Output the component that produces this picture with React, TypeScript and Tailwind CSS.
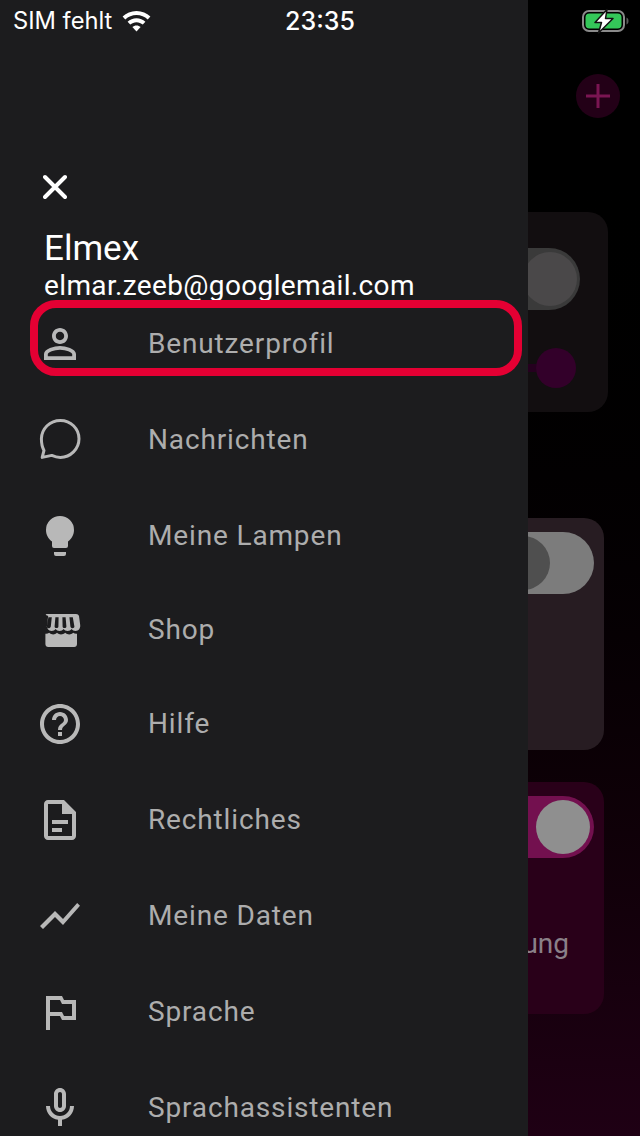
import React from 'react';

const menuItems: { label: string; rowClass: string; icon: React.ReactNode }[] = [
  {
    label: 'Benutzerprofil',
    rowClass: 'h-[96px]',
    icon: (
      <path d="M12 5.9c1.16 0 2.1.94 2.1 2.1s-.94 2.1-2.1 2.1S9.9 9.16 9.9 8s.94-2.1 2.1-2.1m0 9c2.97 0 6.1 1.46 6.1 2.1v1.1H5.9V17c0-.64 3.13-2.1 6.1-2.1M12 4C9.79 4 8 5.79 8 8s1.79 4 4 4 4-1.79 4-4-1.79-4-4-4zm0 9c-2.67 0-8 1.34-8 4v3h16v-3c0-2.66-5.33-4-8-4z" />
    ),
  },
  {
    label: 'Nachrichten',
    rowClass: 'h-[96px]',
    icon: (
      <path
        fill="none"
        stroke="currentColor"
        strokeWidth="1.5"
        strokeLinejoin="round"
        d="M12.200 2.200c5.100 0 9.300 4.100 9.300 9.200s-4.200 9.300-9.300 9.300c-1.500 0-3-.4-4.300-1l-4.800 1 .9-3.500C2.900 15.300 2.700 13.400 2.700 11.400c.1-5.100 4.300-9.200 9.500-9.200z"
      />
    ),
  },
  {
    label: 'Meine Lampen',
    rowClass: 'h-[96px]',
    icon: (
      <path d="M12,2A7,7 0 0,0 5,9C5,11.38 6.19,13.47 8,14.74V17A1,1 0 0,0 9,18H15A1,1 0 0,0 16,17V14.74C17.81,13.47 19,11.38 19,9A7,7 0 0,0 12,2M9,21A1,1 0 0,0 10,22H14A1,1 0 0,0 15,21V20H9V21Z" />
    ),
  },
  {
    label: 'Shop',
    rowClass: 'h-[92px]',
    icon: (
      <>
        <path
          fillRule="evenodd"
          d="M6 4h14c.8 0 1.300.4 1.500 1l.6 4.500c.2 1.600-.8 3-2.300 3-.9 0-1.600-.4-2-1-.4.6-1.200 1-2 1s-1.600-.4-2-1c-.4.6-1.200 1-2 1s-1.600-.4-2-1c-.4.6-1.100 1-2 1-1.500 0-2.500-1.400-2.300-3l.6-4.500C4.300 4.400 4.800 4 5.600 4zM6.200 5.600l-.8 4.700c0 1 1.800 1.100 2-.1l.5-4.600zm3.500 0l-.4 4.700c0 1 1.900 1 1.900 0l.1-4.700zm3.500 0l.1 4.700c0 1 1.900 1 1.900 0l-.4-4.700zm3.500 0l.5 4.600c.2 1.200 2 1.100 2 .1l-.8-4.700z"
        />
        <path d="M4.700 13.900c.7.100 1.400-.1 1.900-.5.6.6 1.300.8 2 .8s1.300-.3 1.900-.8c.6.500 1.300.8 2 .8s1.500-.3 2.100-.8c.6.500 1.300.8 2 .8s1.400-.2 2-.8c.5.400 1.200.6 1.900.5v5.100c0 .9-.6 1.500-1.400 1.500H6.100c-.8 0-1.400-.6-1.400-1.500z" />
      </>
    ),
  },
  {
    label: 'Hilfe',
    rowClass: 'h-[96px]',
    icon: (
      <path d="M11 18h2v-2h-2v2zm1-16C6.480 2 2 6.480 2 12s4.480 10 10 10 10-4.480 10-10S17.520 2 12 2zm0 18c-4.410 0-8-3.590-8-8s3.590-8 8-8 8 3.590 8 8-3.590 8-8 8zm0-14c-2.210 0-4 1.790-4 4h2c0-1.100.9-2 2-2s2 .9 2 2c0 2-3 1.750-3 5h2c0-2.250 3-2.500 3-5 0-2.210-1.790-4-4-4z" />
    ),
  },
  {
    label: 'Rechtliches',
    rowClass: 'h-[96px]',
    icon: (
      <path d="M8 12h8v2H8zm0 4h5v2H8zm6-14H6c-1.100 0-2 .9-2 2v16c0 1.100.89 2 1.990 2H18c1.100 0 2-.9 2-2V8l-6-6zm4 18H6V4h7v5h5v11z" />
    ),
  },
  {
    label: 'Meine Daten',
    rowClass: 'h-[96px]',
    icon: <path d="M3.500 18.490l6-6.010 4 4L22 6.920l-1.410-1.410-7.090 7.970-4-4L2 16.990z" />,
  },
  {
    label: 'Sprache',
    rowClass: 'h-[96px]',
    icon: <path d="M14 6l-1-2H5v17h2v-7h5l1 2h7V6h-6zm4 8h-4l-1-2H7V6h5l1 2h5v6z" />,
  },
  {
    label: 'Sprachassistenten',
    rowClass: 'h-[96px]',
    icon: (
      <path d="M12 14c1.660 0 3-1.340 3-3V5c0-1.660-1.340-3-3-3S9 3.340 9 5v6c0 1.660 1.340 3 3 3zm-1-9c0-.55.45-1 1-1s1 .45 1 1v6c0 .55-.45 1-1 1s-1-.45-1-1V5zm6 6c0 2.760-2.240 5-5 5s-5-2.240-5-5H5c0 3.530 2.610 6.430 6 6.920V21h2v-3.080c3.390-.49 6-3.390 6-6.920h-2z" />
    ),
  },
];

const StatusBar = () => (
  <div className="absolute inset-x-0 top-0 z-20 grid h-[42px] grid-cols-3 items-center font-['Inter',sans-serif] text-white">
    <div className="flex items-center gap-[10px] pl-[13px] text-[23.7px] leading-none">
      <span>SIM fehlt</span>
      <svg width="29" height="22" viewBox="0 0 29 22" fill="#fff">
        <path d="M14.500 1C9 1 4.300 3.100.6 6.500l2.700 3C6.300 6.700 10.100 5 14.500 5s8.200 1.700 11.200 4.500l2.700-3C24.700 3.100 20 1 14.500 1z" />
        <path d="M14.500 8.200c-3.400 0-6.500 1.300-8.900 3.500l2.600 2.900c1.700-1.500 3.900-2.400 6.300-2.400s4.600.9 6.300 2.400l2.600-2.900c-2.400-2.200-5.500-3.500-8.900-3.500z" />
        <path d="M14.500 15.400c-1.600 0-3 .6-4.100 1.600l4.100 4.600 4.100-4.600c-1.100-1-2.500-1.600-4.100-1.600z" />
      </svg>
    </div>
    <div className="text-center text-[25px] font-medium leading-none">23:35</div>
    <div className="flex items-center justify-end pr-[11px]">
      <svg width="48" height="26" viewBox="0 0 48 26">
        <rect x="2" y="3" width="41" height="20" rx="6" fill="none" stroke="#8a8a8a" strokeWidth="2" />
        <rect x="4.500" y="5.500" width="36" height="15" rx="4" fill="#34c759" />
        <path d="M45.500 9.500c1.200.4 2 1.800 2 3.500s-.8 3.100-2 3.500z" fill="#5a5a5a" />
        <path
          d="M26 1.500L14 14.500h6.500L17.500 25 32 10.500h-7.500z"
          fill="#fff"
          stroke="#111"
          strokeWidth="1.500"
          strokeLinejoin="round"
        />
      </svg>
    </div>
  </div>
);

const Drawer = () => (
  <div className="relative z-10 flex h-full w-[528px] shrink-0 flex-col bg-[#1c1c1e] pt-[172px] font-['Roboto',sans-serif]">
    <div className="pl-[43px]">
      <svg width="24" height="30" viewBox="0 0 24 30" stroke="#fff" strokeWidth="4" strokeLinecap="round">
        <path d="M2 5l20 20M22 5L2 25" />
      </svg>
    </div>
    <div className="mt-[27px] pl-[44px] text-white">
      <div className="text-[35px] leading-[40px]">Elmex</div>
      <div className="text-[28px] leading-[34px] tracking-[0.36px]">elmar.zeeb@googlemail.com</div>
    </div>
    <div className="mt-[-7px]">
      {menuItems.map((item) => (
        <div key={item.label} className={`flex items-center ${item.rowClass}`}>
          <svg width="48" height="48" viewBox="0 0 24 24" fill="currentColor" className="ml-9 shrink-0 text-[#b8b8b8]">
            {item.icon}
          </svg>
          <span className="ml-[64px] text-[28px] leading-none tracking-[0.85px] text-[#adadad]">{item.label}</span>
        </div>
      ))}
    </div>
    {/* marker drawn over the first row */}
    <div className="absolute left-[30px] top-[300px] h-[76px] w-[492px] rounded-[26px] border-[8px] border-[#e40033]" />
  </div>
);

const BackgroundPane = () => (
  <div className="flex h-full min-w-0 flex-1 flex-col items-end overflow-hidden bg-gradient-to-b from-black from-[10%] to-[#1f0014] font-['Roboto',sans-serif]">
    <div className="mr-5 mt-[74px] flex h-11 w-11 shrink-0 items-center justify-center rounded-full bg-[#230017]">
      <svg width="24" height="24" viewBox="0 0 24 24" fill="#7a1552">
        <path d="M10.500 0h3v10.500H24v3H13.500V24h-3V13.500H0v-3h10.500z" />
      </svg>
    </div>

    <div className="mr-8 mt-[94px] flex h-[200px] w-[180px] shrink-0 flex-col items-end rounded-[20px] bg-[#120e10] pr-7 pt-9">
      <div className="flex h-[62px] w-[100px] items-center justify-end rounded-full bg-[#3a3a3a] pr-[3px]">
        <div className="h-[54px] w-[54px] rounded-full bg-[#4a4849]" />
      </div>
      <div className="mr-1 mt-[38px] flex items-center">
        <div className="h-2 w-3 bg-[#25001f]" />
        <div className="h-10 w-10 rounded-full bg-[#33002a]" />
      </div>
    </div>

    <div className="mr-9 mt-[106px] flex h-[232px] w-[180px] shrink-0 flex-col items-end rounded-[20px] bg-[#271c22] pr-[10px] pt-[14px]">
      <div className="flex h-[62px] w-[101px] items-center rounded-full bg-[#7c7c7c] pl-[3px]">
        <div className="h-[54px] w-[54px] rounded-full bg-[#4f4f4f]" />
      </div>
    </div>

    <div className="mr-9 mt-8 flex h-[232px] w-[180px] shrink-0 flex-col items-end rounded-[20px] bg-[#290019] pr-[10px] pt-[14px]">
      <div className="flex h-[62px] w-[101px] items-center justify-end rounded-full bg-[#73104f] pr-1">
        <div className="h-[54px] w-[54px] rounded-full bg-[#8f8f8f]" />
      </div>
      <div className="mr-[25px] mt-[66px] text-[28px] leading-10 text-[#8a8088]">ung</div>
    </div>
  </div>
);

export default function App() {
  return (
    <div className="relative flex h-[1136px] w-[640px] overflow-hidden bg-black">
      <StatusBar />
      <Drawer />
      <BackgroundPane />
    </div>
  );
}
